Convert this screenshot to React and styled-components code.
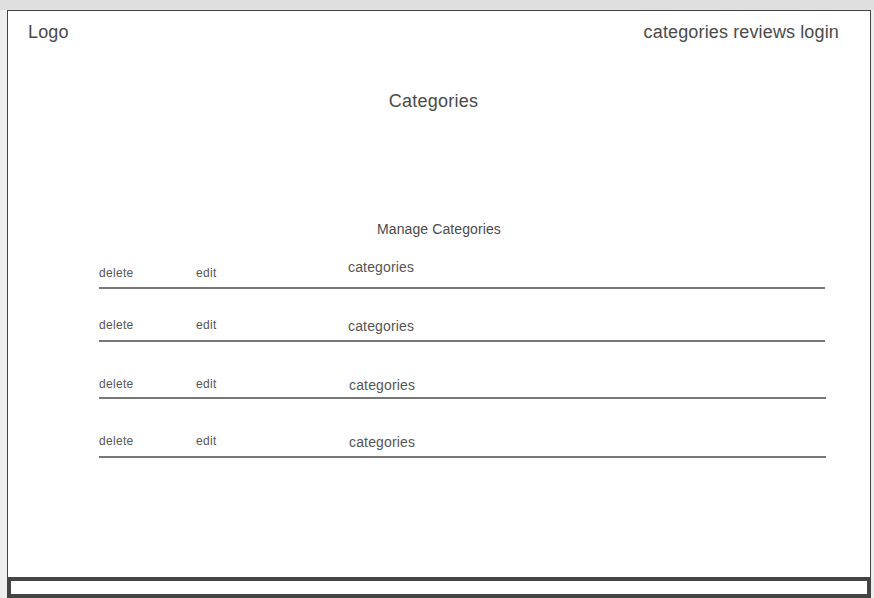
import styled, { createGlobalStyle } from "styled-components";

const GlobalStyle = createGlobalStyle`
  html, body {
    margin: 0;
    padding: 0;
    background: #eeeeee;
    overflow: hidden;
  }
  body {
    font-family: "Liberation Sans", Arial, sans-serif;
    color: #4a4a4a;
  }
`;

const Screen = styled.div`
  width: 874px;
  height: 598px;
  display: flex;
  flex-direction: column;
`;

const ChromeBar = styled.div`
  height: 10px;
  flex: none;
  background: #dfdfdf;
`;

const Body = styled.div`
  flex: 1;
  display: flex;
  padding-left: 7px;
  min-height: 0;
`;

const Frame = styled.div`
  width: 862px;
  background: #fff;
  border: 1px solid #444;
  border-bottom: none;
  display: flex;
  flex-direction: column;
`;

const Header = styled.header`
  display: flex;
  justify-content: space-between;
  padding: 11px 31px 0 20px;
  font-size: 18px;
  line-height: 21px;
  letter-spacing: 0.15px;
`;

const Nav = styled.nav`
  display: flex;
  gap: 5px;
`;

const Title = styled.h1`
  margin: 48px 0 0;
  padding-right: 11px;
  text-align: center;
  font-size: 18px;
  line-height: 21px;
  font-weight: 400;
  letter-spacing: 0.25px;
`;

const Subtitle = styled.h2`
  margin: 109px 0 0;
  text-align: center;
  font-size: 14px;
  line-height: 16px;
  font-weight: 400;
  letter-spacing: 0.1px;
`;

const Table = styled.div`
  margin: 10px 0 0 91px;
  width: 727px;
  display: flex;
  flex-direction: column;
`;

const Row = styled.div`
  display: grid;
  grid-template-columns: 97px 152px 1fr;
  align-items: end;
  height: ${(p) => p.$height}px;
  margin-right: ${(p) => p.$trim}px;
  border-bottom: 2px solid #777;
  color: #555;
`;

const Action = styled.span`
  font-size: 12px;
  line-height: 14px;
  letter-spacing: 0.3px;
  padding-bottom: ${(p) => p.$lift}px;
`;

const Name = styled.span`
  font-size: 14px;
  line-height: 16px;
  letter-spacing: 0.15px;
  padding-bottom: ${(p) => p.$lift}px;
  padding-left: ${(p) => p.$shift}px;
`;

const Footer = styled.div`
  margin-top: auto;
  height: 21px;
  box-sizing: border-box;
  border: solid #444;
  border-width: 4px 3px;
  background: #fff;
  flex: none;
`;

const rows = [
  { height: 40, actions: 7, name: 12, shift: 0, trim: 1 },
  { height: 51, actions: 8, name: 6, shift: 0, trim: 1 },
  { height: 55, actions: 6, name: 4, shift: 1, trim: 0 },
  { height: 57, actions: 8, name: 6, shift: 1, trim: 0 },
];

export default function App() {
  return (
    <>
      <GlobalStyle />
      <Screen>
        <ChromeBar />
        <Body>
          <Frame>
            <Header>
              <span>Logo</span>
              <Nav>
                <span>categories</span>
                <span>reviews</span>
                <span>login</span>
              </Nav>
            </Header>
            <Title>Categories</Title>
            <Subtitle>Manage Categories</Subtitle>
            <Table>
              {rows.map((r, i) => (
                <Row key={i} $height={r.height} $trim={r.trim}>
                  <Action $lift={r.actions}>delete</Action>
                  <Action $lift={r.actions}>edit</Action>
                  <Name $lift={r.name} $shift={r.shift}>
                    categories
                  </Name>
                </Row>
              ))}
            </Table>
            <Footer />
          </Frame>
        </Body>
      </Screen>
    </>
  );
}
